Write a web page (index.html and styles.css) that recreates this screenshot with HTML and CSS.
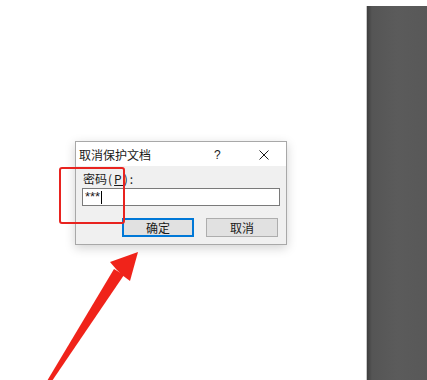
FILE: index.html
```html
<!DOCTYPE html>
<html lang="zh-CN">
  <head>
    <meta charset="UTF-8" />
    <title>取消保护文档</title>
    <link rel="stylesheet" href="styles.css">
  </head>
  <body>
    <div class="stage">
      <div class="side-panel"></div>

      <div class="dialog">
        <div class="title-bar">
          <span class="title">取消保护文档</span>
          <span class="help">?</span>
          <svg class="close" viewBox="0 0 10 10" xmlns="http://www.w3.org/2000/svg">
            <path d="M0.5 0.5 L9.5 9.5 M9.5 0.5 L0.5 9.5" stroke="#1a1a1a" stroke-width="1" fill="none" />
          </svg>
        </div>
        <div class="dialog-body">
          <label class="field-label">密码<span class="hotkey">(<u>P</u>)</span>:</label>
          <div class="password-input">***<span class="caret"></span></div>
          <div class="buttons">
            <button class="btn btn-default">确定</button>
            <button class="btn">取消</button>
          </div>
        </div>
      </div>

      <div class="highlight"></div>

      <svg class="arrow" viewBox="0 0 120 140" xmlns="http://www.w3.org/2000/svg">
        <!-- shaft from bottom-left up to the head -->
        <polygon points="17,140 22,140 94,34 84,28" fill="#f0231a" />
        <polygon points="108,11 80,21 86,28 92,34 100,40" fill="#f0231a" />
      </svg>
    </div>
  </body>
</html>
```

FILE: styles.css
```css
* {
  box-sizing: border-box;
}

body {
  margin: 0;
  background: #ffffff;
  font-family: "Noto Sans CJK SC", "Noto Sans", sans-serif;
  font-size: 12px;
  color: #1a1a1a;
}

.stage {
  position: relative;
  width: 427px;
  height: 380px;
  overflow: hidden;
  background: #ffffff;
}

.side-panel {
  position: absolute;
  left: 366px;
  top: 6px;
  width: 61px;
  height: 374px;
  background: linear-gradient(to right, #3e3e3e 0px, #555555 5px, #5b5b5b 30px, #585858 100%);
  border-left: 1px solid #c8c8c8;
}

.dialog {
  position: absolute;
  left: 75px;
  top: 141px;
  width: 212px;
  height: 104px;
  background: #f0f0f0;
  border: 1px solid #a8a8a8;
  box-shadow: 0 3px 10px rgba(0, 0, 0, 0.18);
  display: flex;
  flex-direction: column;
}

.title-bar {
  height: 24px;
  background: #ffffff;
  display: flex;
  align-items: center;
  padding-left: 3px;
}

.title {
  flex: 1;
  font-size: 12px;
  line-height: 1;
  padding-top: 2px;
}

.help {
  font-family: "Liberation Sans", sans-serif;
  font-size: 12px;
  width: 14px;
  margin-right: 31px;
  padding-top: 2px;
}

.close {
  width: 10px;
  height: 10px;
  margin-right: 17px;
  margin-top: 2px;
}

.dialog-body {
  flex: 1;
  display: flex;
  flex-direction: column;
  padding: 5px 6px 0 6px;
}

.field-label {
  font-size: 12px;
  line-height: 15px;
  height: 15px;
  padding-left: 1px;
  white-space: nowrap;
}

.hotkey {
  letter-spacing: 2px;
  padding-left: 1px;
}

.field-label u {
  text-decoration: underline;
}

.password-input {
  margin-top: 2px;
  height: 18px;
  background: #ffffff;
  border: 1px solid #7a7a7a;
  font-family: "Liberation Sans", sans-serif;
  font-size: 13px;
  line-height: 16px;
  padding-left: 2px;
  display: flex;
  align-items: center;
}

.caret {
  display: inline-block;
  width: 1px;
  height: 13px;
  background: #000000;
  margin-left: 1px;
}

.buttons {
  display: flex;
  justify-content: flex-end;
  gap: 12px;
  margin-top: 12px;
  padding-right: 2px;
}

.btn {
  width: 72px;
  height: 19px;
  padding: 0;
  font-family: "Noto Sans CJK SC", sans-serif;
  font-size: 12px;
  line-height: 1;
  color: #1a1a1a;
  background: #e1e1e1;
  border: 1px solid #adadad;
}

.btn-default {
  border: 2px solid #0078d7;
}

.highlight {
  position: absolute;
  left: 59px;
  top: 167px;
  width: 66px;
  height: 57px;
  border: 2px solid #e8231f;
  border-radius: 3px;
}

.arrow {
  position: absolute;
  left: 30px;
  top: 241px;
  width: 120px;
  height: 140px;
}
```
